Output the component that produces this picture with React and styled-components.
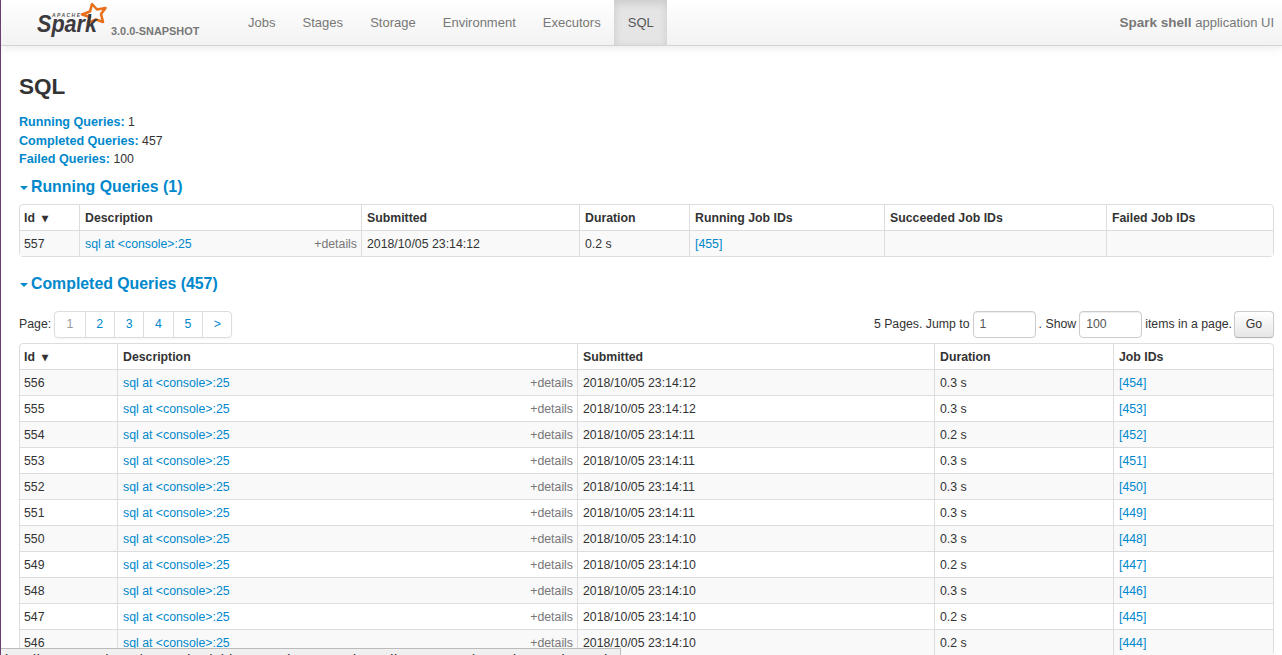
import React from "react";
import styled, { createGlobalStyle } from "styled-components";

const GlobalStyle = createGlobalStyle`
  html, body {
    margin: 0;
    padding: 0;
    height: 100%;
    overflow: hidden;
  }

  body {
    font-family: "Liberation Sans", Arial, sans-serif;
    font-size: 12.3px;
    line-height: 18.6px;
    color: #333;
    background: #fff;
    border-left: 1px solid #6a3d73;
  }

  a {
    color: #0088cc;
    text-decoration: none;
  }
`;

const Navbar = styled.div`
  display: flex;
  align-items: stretch;
  height: 45px;
  font-size: 13px;
  background: linear-gradient(to bottom, #ffffff, #f2f2f2);
  border-bottom: 1px solid #d4d4d4;
  box-shadow: 0 1px 10px rgba(0, 0, 0, 0.1);
`;

const Brand = styled.div`
  display: flex;
  width: 247px;
  padding-left: 36px;
  box-sizing: border-box;
`;

const Version = styled.span`
  margin: 22px 0 0 4px;
  font-size: 10.9px;
  font-weight: bold;
  color: #777;
  white-space: nowrap;
`;

const NavList = styled.div`
  display: flex;
  flex: 1;
`;

const NavItem = styled.a`
  display: flex;
  align-items: center;
  padding: 1px 13.55px 0;
  color: ${(p) => (p.$active ? "#555" : "#777")};
  background: ${(p) => (p.$active ? "#e5e5e5" : "transparent")};
  box-shadow: ${(p) => (p.$active ? "inset 0 3px 8px rgba(0, 0, 0, 0.125)" : "none")};

  &:first-child {
    padding-left: 0;
  }
`;

const AppName = styled.div`
  align-self: center;
  margin: 1px 8px 0 0;
  color: #777;
  white-space: nowrap;

  strong {
    font-size: 13.5px;
  }
`;

const Page = styled.div`
  padding: 0 8px 0 18px;
`;

const Title = styled.h3`
  margin: 0;
  padding-top: 27px;
  font-size: 22.5px;
  line-height: 27px;
  font-weight: bold;
  color: #333;
`;

const Summary = styled.ul`
  list-style: none;
  margin: 13px 0 0;
  padding: 0;

  strong {
    font-size: 12.6px;
    color: #0088cc;
  }
`;

const SectionTitle = styled.h4`
  display: flex;
  align-items: center;
  margin: ${(p) => p.$top}px 0 ${(p) => p.$bottom}px;
  font-size: 15.85px;
  line-height: 20px;
  font-weight: bold;
  color: #0088cc;
`;

const Caret = styled.span`
  flex-shrink: 0;
  width: 0;
  height: 0;
  margin: 2px 3px 0 1px;
  border-left: 4px solid transparent;
  border-right: 4px solid transparent;
  border-top: 4px solid #0088cc;
`;

const Table = styled.table`
  width: 100%;
  table-layout: fixed;
  border-collapse: separate;
  border-spacing: 0;
  border: 1px solid #ddd;
  border-radius: 4px;

  th,
  td {
    height: 17px;
    padding: 5px 4px 3px 5px;
    text-align: left;
    vertical-align: top;
    line-height: 17.05px;
    border-left: 1px solid #ddd;
    border-top: 1px solid #ddd;
    white-space: nowrap;
  }

  th {
    height: 16px;
    border-top: 0;
    font-weight: bold;
  }

  th:first-child,
  td:first-child {
    padding-left: 4px;
    border-left: 0;
  }

  tbody tr:nth-child(odd) td {
    background: #f9f9f9;
  }
`;

const Details = styled.span`
  float: right;
  color: #777;
`;

const PagerRow = styled.div`
  display: flex;
  align-items: center;
  justify-content: space-between;
  height: 27px;
  margin-bottom: 5px;
`;

const PagerLeft = styled.div`
  display: flex;
  align-items: center;
  gap: 3px;
`;

const Pagination = styled.div`
  display: flex;
  height: 27px;
  box-sizing: border-box;
  border: 1px solid #ddd;
  border-radius: 4px;
  box-shadow: 0 1px 2px rgba(0, 0, 0, 0.05);
`;

const PageLink = styled.a`
  display: flex;
  align-items: center;
  justify-content: center;
  width: 29.4px;
  box-sizing: border-box;
  color: ${(p) => (p.$current ? "#999" : "#0088cc")};
  border-left: ${(p) => (p.$first ? "0" : "1px solid #ddd")};
`;

const PagerRight = styled.div`
  display: flex;
  align-items: center;
  gap: 3px;
`;

const ItemsLabel = styled.span`
  margin-right: -1px;
`;

const PageInput = styled.input`
  width: 63px;
  height: 27px;
  box-sizing: border-box;
  padding: 0 6px;
  font: 12.3px "Liberation Sans", Arial, sans-serif;
  color: #555;
  border: 1px solid #ccc;
  border-radius: 4px;
  box-shadow: inset 0 1px 1px rgba(0, 0, 0, 0.075);
  outline: none;
`;

const GoButton = styled.button`
  width: 40px;
  height: 27px;
  padding: 0;
  font: 12.3px "Liberation Sans", Arial, sans-serif;
  color: #333;
  background: linear-gradient(to bottom, #ffffff, #e6e6e6);
  border: 1px solid #ccc;
  border-bottom-color: #b3b3b3;
  border-radius: 4px;
  box-shadow: inset 0 1px 0 rgba(255, 255, 255, 0.2), 0 1px 2px rgba(0, 0, 0, 0.05);
`;

const StatusBar = styled.div`
  position: fixed;
  left: 1px;
  bottom: 0;
  width: 620px;
  height: 7px;
  overflow: hidden;
  box-sizing: border-box;
  padding: 3px 0 0 4px;
  font-size: 14px;
  line-height: 17px;
  letter-spacing: 0.6px;
  color: #222;
  white-space: nowrap;
  background: #f0f0f0;
  border-top: 1px solid #bbb;
  border-right: 1px solid #bbb;
`;

const rows = [
  [556, "23:14:12", "0.3 s", 454],
  [555, "23:14:12", "0.3 s", 453],
  [554, "23:14:11", "0.2 s", 452],
  [553, "23:14:11", "0.3 s", 451],
  [552, "23:14:11", "0.3 s", 450],
  [551, "23:14:11", "0.3 s", 449],
  [550, "23:14:10", "0.3 s", 448],
  [549, "23:14:10", "0.2 s", 447],
  [548, "23:14:10", "0.3 s", 446],
  [547, "23:14:10", "0.2 s", 445],
  [546, "23:14:10", "0.2 s", 444],
];

const tabs = ["Jobs", "Stages", "Storage", "Environment", "Executors", "SQL"];

function Logo() {
  return (
    <svg width="70" height="40" viewBox="0 0 70 40">
      <path
        d="M55 4 L60 9.5 L68.5 8 L64 14 L66 22 L59 19.5 L51 23 L53 17 L45 14.5 L53 11.5 Z"
        fill="none"
        stroke="#e8701a"
        strokeWidth="2.6"
        strokeLinejoin="round"
      />
      <text x="15" y="17" fontFamily="Liberation Sans" fontSize="5" fontWeight="bold" fontStyle="italic" fill="#555" textLength="28">
        APACHE
      </text>
      <text x="0" y="32" fontFamily="Liberation Sans" fontSize="24" fontWeight="bold" fontStyle="italic" fill="#3c3a3e" textLength="60" lengthAdjust="spacingAndGlyphs">
        Spark
      </text>
    </svg>
  );
}

function App() {
  return (
    <>
      <GlobalStyle />
      <Navbar>
        <Brand>
          <Logo />
          <Version>3.0.0-SNAPSHOT</Version>
        </Brand>
        <NavList>
          {tabs.map((tab) => (
            <NavItem key={tab} $active={tab === "SQL"} href="#">
              {tab}
            </NavItem>
          ))}
        </NavList>
        <AppName>
          <strong>Spark shell</strong> application UI
        </AppName>
      </Navbar>
      <Page>
        <Title>SQL</Title>
        <Summary>
          <li><strong>Running Queries:</strong> 1</li>
          <li><strong>Completed Queries:</strong> 457</li>
          <li><strong>Failed Queries:</strong> 100</li>
        </Summary>
        <SectionTitle $top={8} $bottom={7}>
          <Caret />
          Running Queries (1)
        </SectionTitle>
        <Table>
          <colgroup>
            <col width="59" />
            <col width="282" />
            <col width="218" />
            <col width="110" />
            <col width="195" />
            <col width="222" />
            <col />
          </colgroup>
          <thead>
            <tr>
              <th>Id &nbsp;▾</th>
              <th>Description</th>
              <th>Submitted</th>
              <th>Duration</th>
              <th>Running Job IDs</th>
              <th>Succeeded Job IDs</th>
              <th>Failed Job IDs</th>
            </tr>
          </thead>
          <tbody>
            <tr>
              <td>557</td>
              <td>
                <a href="#">sql at &lt;console&gt;:25</a>
                <Details>+details</Details>
              </td>
              <td>2018/10/05 23:14:12</td>
              <td>0.2 s</td>
              <td><a href="#">[455]</a></td>
              <td></td>
              <td></td>
            </tr>
          </tbody>
        </Table>
        <SectionTitle $top={17} $bottom={17}>
          <Caret />
          Completed Queries (457)
        </SectionTitle>
        <PagerRow>
          <PagerLeft>
            <span>Page:</span>
            <Pagination>
              {["1", "2", "3", "4", "5", ">"].map((label, i) => (
                <PageLink key={label} $first={i === 0} $current={i === 0} href="#">
                  {label}
                </PageLink>
              ))}
            </Pagination>
          </PagerLeft>
          <PagerRight>
            <span>5 Pages. Jump to</span>
            <PageInput defaultValue="1" />
            <span>. Show</span>
            <PageInput defaultValue="100" />
            <ItemsLabel>items in a page.</ItemsLabel>
            <GoButton>Go</GoButton>
          </PagerRight>
        </PagerRow>
        <Table>
          <colgroup>
            <col width="97" />
            <col width="460" />
            <col width="357" />
            <col width="179" />
            <col />
          </colgroup>
          <thead>
            <tr>
              <th>Id &nbsp;▾</th>
              <th>Description</th>
              <th>Submitted</th>
              <th>Duration</th>
              <th>Job IDs</th>
            </tr>
          </thead>
          <tbody>
            {rows.map(([id, time, duration, job]) => (
              <tr key={id}>
                <td>{id}</td>
                <td>
                  <a href="#">sql at &lt;console&gt;:25</a>
                  <Details>+details</Details>
                </td>
                <td>2018/10/05 {time}</td>
                <td>{duration}</td>
                <td><a href="#">[{job}]</a></td>
              </tr>
            ))}
          </tbody>
        </Table>
      </Page>
      <StatusBar>localhost:4040/SQL/execution/?id=556 sql at console: collect at SparkSession.scala:25 details</StatusBar>
    </>
  );
}

export default App;
